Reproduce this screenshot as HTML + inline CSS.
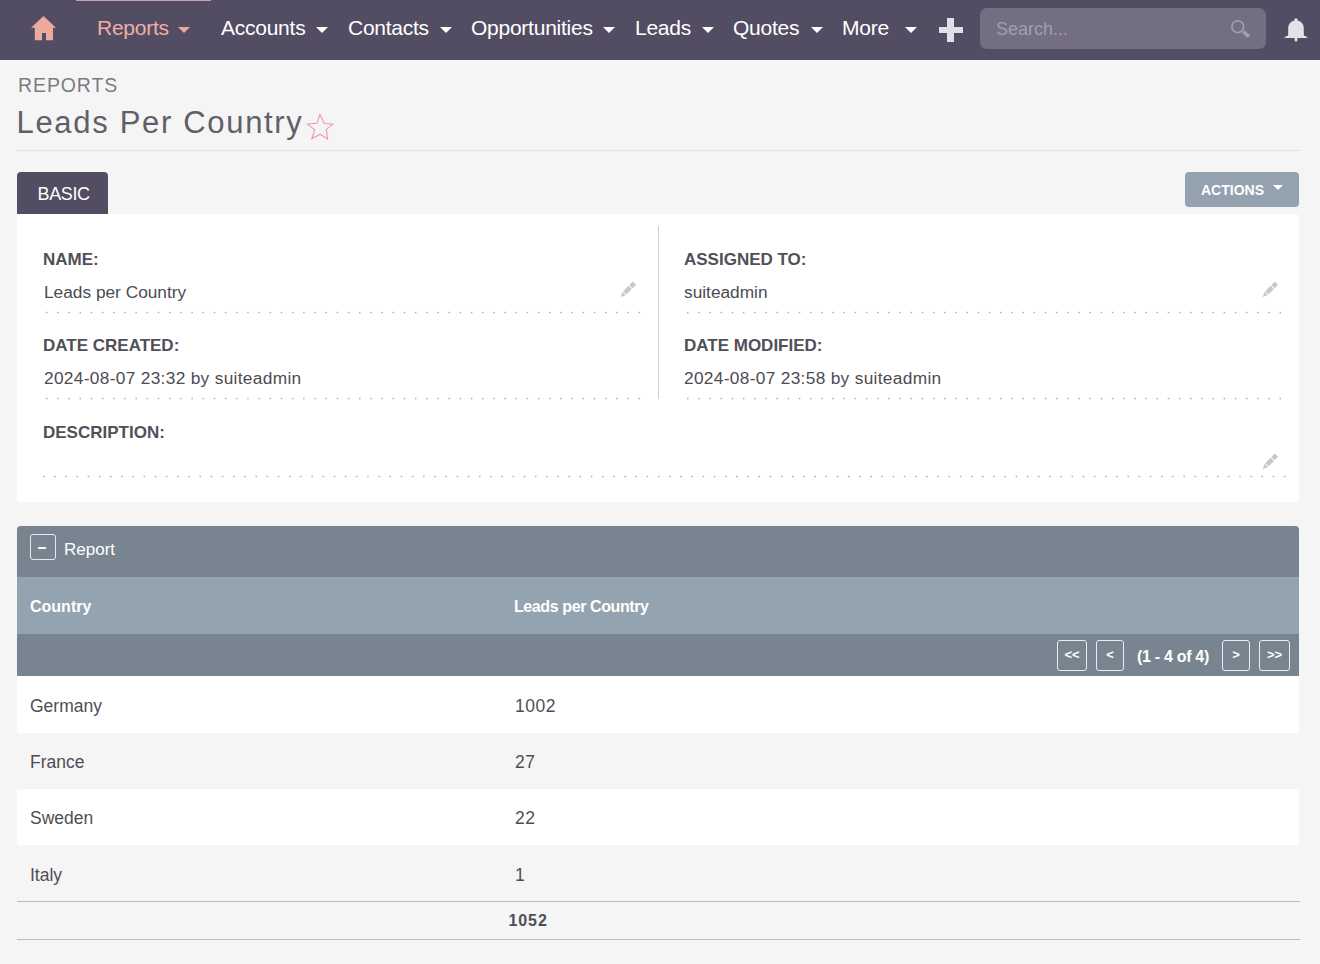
<!DOCTYPE html>
<html><head><meta charset="utf-8">
<style>
*{margin:0;padding:0;box-sizing:border-box}
html,body{width:1320px;height:964px;overflow:hidden;background:#f5f5f5;font-family:"Liberation Sans",sans-serif}
.a{position:absolute;white-space:nowrap}
#nav{position:absolute;left:0;top:0;width:1320px;height:60px;background:#534d64}
.ni{position:absolute;top:15.5px;font-size:21px;letter-spacing:-0.25px;color:#fff;line-height:24px}
.car{position:absolute;top:27px;width:0;height:0;border-left:6px solid transparent;border-right:6px solid transparent;border-top:6px solid #fff}
.lbl{position:absolute;font-weight:bold;font-size:17px;color:#515058;line-height:20px;margin-top:1px}
.val{position:absolute;font-size:17.3px;color:#4c4b52;line-height:20px}
.dots{position:absolute;height:1px;background-image:repeating-linear-gradient(to right,#9c9c9c 0,#9c9c9c 1.6px,transparent 1.6px,transparent 11.18px)}
.pen{position:absolute;width:18px;height:18px}
.row{position:absolute;left:17px;width:1282px;height:56px}
.cell{position:absolute;font-size:17.5px;color:#4f4e55;line-height:20px;margin-top:1px}
.pb{position:absolute;top:640px;height:31px;border:1px solid #e8ecef;border-radius:3px;color:#fff;font-weight:bold;font-size:13px;text-align:center;line-height:28px}
</style></head><body>
<div id="nav">
  <div class="a" style="left:76px;top:0;width:135px;height:1px;background:#c2a3aa"></div>
  <!-- home -->
  <svg class="a" style="left:30px;top:15px" width="27" height="26" viewBox="0 0 27 26">
    <path d="M13.5 1 L1 12.8 L4.8 12.8 L4.8 25.3 L12 25.3 L12 18 L16 18 L16 25.3 L23 25.3 L23 12.8 L26 12.8 Z" fill="#eea99f"/>
  </svg>
  <div class="ni" style="left:97px;color:#f0aea5">Reports</div>
  <div class="car" style="left:178px;border-top-color:#eea99f"></div>
  <div class="ni" style="left:221px">Accounts</div>
  <div class="car" style="left:316px"></div>
  <div class="ni" style="left:348px">Contacts</div>
  <div class="car" style="left:440px"></div>
  <div class="ni" style="left:471px">Opportunities</div>
  <div class="car" style="left:603px"></div>
  <div class="ni" style="left:635px">Leads</div>
  <div class="car" style="left:702px"></div>
  <div class="ni" style="left:733px">Quotes</div>
  <div class="car" style="left:811px"></div>
  <div class="ni" style="left:842px">More</div>
  <div class="car" style="left:905px"></div>
  <!-- plus -->
  <div class="a" style="left:938.5px;top:27px;width:24px;height:6px;background:#e2dfe8"></div>
  <div class="a" style="left:947px;top:18px;width:7px;height:24px;background:#e2dfe8"></div>
  <!-- search -->
  <div class="a" style="left:980px;top:8px;width:286px;height:41px;background:#736e82;border-radius:7px"></div>
  <div class="a" style="left:996px;top:17px;font-size:18px;color:#a29daf;line-height:24px">Search...</div>
  <svg class="a" style="left:1229px;top:19px" width="24" height="22" viewBox="0 0 24 22">
    <circle cx="8.8" cy="7.8" r="5.9" fill="none" stroke="#a29daf" stroke-width="1.7"/>
    <path d="M14.2 12.6 L20 17.6" stroke="#a29daf" stroke-width="3.8" stroke-linecap="butt"/>
  </svg>
  <!-- bell -->
  <svg class="a" style="left:1283px;top:17px" width="26" height="26" viewBox="0 0 26 26">
    <path d="M13 1.2 a1.6 1.6 0 0 1 1.6 1.6 v0.6 c4.2 1 6.2 4 6.2 8.4 v5.6 c0 0.9 0.6 1.5 3.4 2.6 v0.9 H1.8 v-0.9 c2.8 -1.1 3.4 -1.7 3.4 -2.6 v-5.6 c0 -4.4 2 -7.4 6.2 -8.4 v-0.6 a1.6 1.6 0 0 1 1.6 -1.6z" fill="#e4e1e8"/>
    <rect x="11.7" y="20" width="2.6" height="4.4" rx="1.2" fill="#e4e1e8"/>
  </svg>
</div>

<div class="a" style="left:18px;top:73.5px;font-size:19.5px;letter-spacing:0.9px;color:#7c7b80;line-height:22px">REPORTS</div>
<div class="a" style="left:16.5px;top:105.5px;font-size:31px;letter-spacing:1.68px;color:#605f67;line-height:34px">Leads Per Country</div>
<svg class="a" style="left:306px;top:113px" width="28" height="28" viewBox="0 0 28 28"><path d="M13.9 1.6 L18.4 10.4 L26.8 11.1 L20.3 16.4 L21.6 25.9 L14.2 21.2 L5.8 25.6 L8.7 16.6 L1.3 11.1 L11 10.3 Z" fill="none" stroke="#e39aa0" stroke-width="1.05" stroke-linejoin="miter"/></svg>
<div class="a" style="left:17px;top:150px;width:1283px;height:1px;background:#e2e2e2"></div>

<!-- tab & actions -->
<div class="a" style="left:17px;top:172px;width:91px;height:43px;background:#534d64;border-radius:4px 4px 0 0"></div>
<div class="a" style="left:37.5px;top:184px;font-size:18px;letter-spacing:-0.35px;color:#fff;line-height:20px">BASIC</div>
<div class="a" style="left:1185px;top:172px;width:114px;height:35px;background:#94a2af;border-radius:4px"></div>
<div class="a" style="left:1201px;top:182px;font-size:14px;font-weight:bold;color:#fff;line-height:16px">ACTIONS</div>
<div class="a" style="left:1273px;top:185px;width:0;height:0;border-left:5px solid transparent;border-right:5px solid transparent;border-top:5px solid #fff"></div>

<!-- basic panel -->
<div class="a" style="left:17px;top:214px;width:1282px;height:288px;background:#fff;border-radius:0 4px 4px 4px"></div>
<div class="a" style="left:658px;top:226px;width:1px;height:173px;background:#cfcfcf"></div>

<div class="lbl" style="left:43px;top:249px">NAME:</div>
<div class="val" style="left:44px;top:282px">Leads per Country</div>
<svg class="a" style="left:46px;top:311px" width="596" height="3"><line x1="0" y1="1.5" x2="596" y2="1.5" stroke="#b0b0b0" stroke-width="1.3" stroke-dasharray="1.5 9.68"/></svg>
<svg class="a" style="left:619px;top:280px" width="20" height="20" viewBox="0 0 20 20"><g fill="#c9c9c9" transform="translate(1.7,16.9) rotate(-45)"><path d="M0 0 L4.8 -2.4 L4.8 2.4 Z"/><rect x="5.7" y="-2.4" width="7.8" height="4.8"/><rect x="14.5" y="-2.4" width="5" height="4.8" rx="0.8"/></g></svg>


<div class="lbl" style="left:684px;top:249px">ASSIGNED TO:</div>
<div class="val" style="left:684px;top:282px">suiteadmin</div>
<svg class="a" style="left:687px;top:311px" width="598" height="3"><line x1="0" y1="1.5" x2="598" y2="1.5" stroke="#b0b0b0" stroke-width="1.3" stroke-dasharray="1.5 9.68"/></svg>
<svg class="a" style="left:1261px;top:280px" width="20" height="20" viewBox="0 0 20 20"><g fill="#c9c9c9" transform="translate(1.7,16.9) rotate(-45)"><path d="M0 0 L4.8 -2.4 L4.8 2.4 Z"/><rect x="5.7" y="-2.4" width="7.8" height="4.8"/><rect x="14.5" y="-2.4" width="5" height="4.8" rx="0.8"/></g></svg>


<div class="lbl" style="left:43px;top:335px">DATE CREATED:</div>
<div class="val" style="left:44px;top:368px;letter-spacing:0.32px">2024-08-07 23:32 by suiteadmin</div>
<svg class="a" style="left:46px;top:397px" width="596" height="3"><line x1="0" y1="1.5" x2="596" y2="1.5" stroke="#b0b0b0" stroke-width="1.3" stroke-dasharray="1.5 9.68"/></svg>

<div class="lbl" style="left:684px;top:335px">DATE MODIFIED:</div>
<div class="val" style="left:684px;top:368px;letter-spacing:0.32px">2024-08-07 23:58 by suiteadmin</div>
<svg class="a" style="left:687px;top:397px" width="598" height="3"><line x1="0" y1="1.5" x2="598" y2="1.5" stroke="#b0b0b0" stroke-width="1.3" stroke-dasharray="1.5 9.68"/></svg>

<div class="lbl" style="left:43px;top:422px">DESCRIPTION:</div>
<svg class="a" style="left:43px;top:475px" width="1245" height="3"><line x1="0" y1="1.5" x2="1245" y2="1.5" stroke="#b0b0b0" stroke-width="1.3" stroke-dasharray="1.5 9.68"/></svg>
<svg class="a" style="left:1261px;top:452px" width="20" height="20" viewBox="0 0 20 20"><g fill="#c9c9c9" transform="translate(1.7,16.9) rotate(-45)"><path d="M0 0 L4.8 -2.4 L4.8 2.4 Z"/><rect x="5.7" y="-2.4" width="7.8" height="4.8"/><rect x="14.5" y="-2.4" width="5" height="4.8" rx="0.8"/></g></svg>


<!-- report panel -->
<div class="a" style="left:17px;top:526px;width:1282px;height:51px;background:#788590;border-radius:4px 4px 0 0"></div>
<div class="a" style="left:30px;top:534px;width:26px;height:26px;border:1px solid #e6e9ec;border-radius:3px"></div>
<div class="a" style="left:38px;top:547px;width:8px;height:2px;background:#f4f5f6"></div>
<div class="a" style="left:64px;top:539.5px;font-size:17px;color:#fff;line-height:20px">Report</div>

<div class="a" style="left:17px;top:577px;width:1282px;height:57px;background:#94a3b0"></div>
<div class="a" style="left:30px;top:597px;font-size:16px;font-weight:bold;color:#fff;line-height:20px">Country</div>
<div class="a" style="left:514px;top:597px;font-size:16px;letter-spacing:-0.4px;font-weight:bold;color:#fff;line-height:20px">Leads per Country</div>

<div class="a" style="left:17px;top:634px;width:1282px;height:42px;background:#788590"></div>
<div class="pb" style="left:1057px;width:30px">&lt;&lt;</div>
<div class="pb" style="left:1096px;width:28px">&lt;</div>
<div class="a" style="left:1137px;top:647px;font-size:16px;letter-spacing:-0.3px;font-weight:bold;color:#fff;line-height:20px">(1 - 4 of 4)</div>
<div class="pb" style="left:1222px;width:28px">&gt;</div>
<div class="pb" style="left:1259px;width:31px">&gt;&gt;</div>

<div class="row" style="top:676px;height:57px;background:#fff"></div>
<div class="cell" style="left:30px;top:695px">Germany</div>
<div class="cell" style="left:515px;top:695px;letter-spacing:0.5px">1002</div>
<div class="row" style="top:733px;background:#f5f5f5"></div>
<div class="cell" style="left:30px;top:751px">France</div>
<div class="cell" style="left:515px;top:751px;letter-spacing:0.5px">27</div>
<div class="row" style="top:789px;background:#fff"></div>
<div class="cell" style="left:30px;top:807px">Sweden</div>
<div class="cell" style="left:515px;top:807px;letter-spacing:0.5px">22</div>
<div class="row" style="top:845px;background:#f5f5f5"></div>
<div class="cell" style="left:30px;top:864px">Italy</div>
<div class="cell" style="left:515px;top:864px">1</div>
<div class="a" style="left:17px;top:901px;width:1283px;height:1px;background:#bdbdbd"></div>
<div class="a" style="left:508.5px;top:911px;font-size:16px;letter-spacing:0.9px;font-weight:bold;color:#4f4e55;line-height:20px">1052</div>
<div class="a" style="left:17px;top:939px;width:1283px;height:1px;background:#bdbdbd"></div>
</body></html>
